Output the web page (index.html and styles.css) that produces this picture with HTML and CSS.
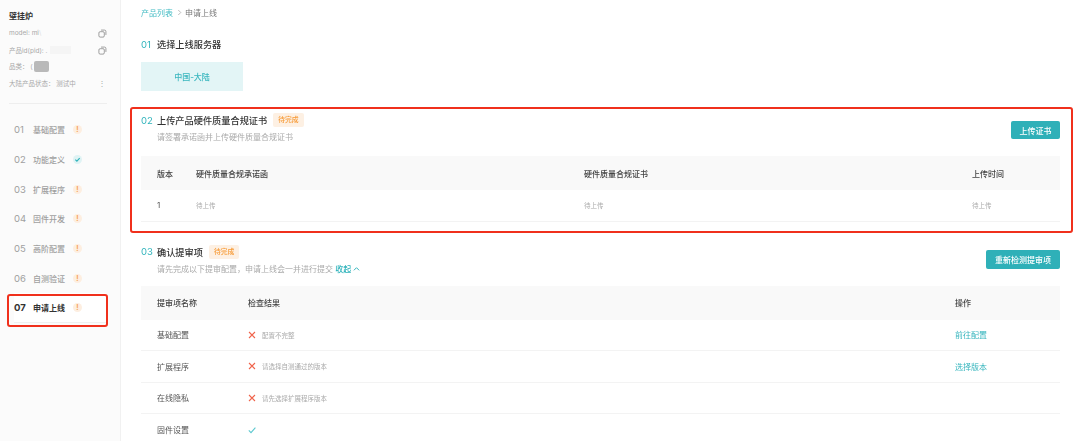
FILE: index.html
```html
<!DOCTYPE html>
<html lang="zh">
<head>
<meta charset="utf-8">
<title>申请上线</title>
<link rel="stylesheet" href="styles.css">
</head>
<body>
<div class="page">
  <aside class="side">
    <h1 class="prod">壁挂炉</h1>
    <div class="meta"><span>model: mi<span class="fade">\</span></span><svg class="copy" viewBox="0 0 10 10"><rect x="1" y="3" width="6" height="6" rx="1.4"/><path d="M3.4 1.2h3.8a1.6 1.6 0 0 1 1.6 1.6v3.8"/></svg></div>
    <div class="meta"><span>产品id(pid): .</span><span class="mask-light"></span><svg class="copy" viewBox="0 0 10 10"><rect x="1" y="3" width="6" height="6" rx="1.4"/><path d="M3.4 1.2h3.8a1.6 1.6 0 0 1 1.6 1.6v3.8"/></svg></div>
    <div class="meta"><span>品类： (</span><span class="mask-grey"></span></div>
    <div class="meta"><span>大陆产品状态： 测试中</span><span class="dots">⋮</span></div>
    <div class="divider"></div>
    <nav class="steps">
      <div class="step"><b>01</b><span>基础配置</span><i class="warn">!</i></div>
      <div class="step"><b>02</b><span>功能定义</span><i class="ok"><svg viewBox="0 0 8 8"><path d="M1.5 4.2 3.3 6l3.2-3.6"/></svg></i></div>
      <div class="step"><b>03</b><span>扩展程序</span><i class="warn">!</i></div>
      <div class="step"><b>04</b><span>固件开发</span><i class="warn">!</i></div>
      <div class="step"><b>05</b><span>高阶配置</span><i class="warn">!</i></div>
      <div class="step"><b>06</b><span>自测验证</span><i class="warn">!</i></div>
      <div class="step active"><b>07</b><span>申请上线</span><i class="warn">!</i></div>
    </nav>
    <div class="mark mark-side"></div>
  </aside>
  <main class="main">
    <div class="crumb"><a>产品列表</a><svg viewBox="0 0 6 8"><path d="M1.5 1 4.5 4 1.5 7"/></svg><span>申请上线</span></div>

    <section class="s1">
      <div class="head"><b class="num">01</b><h2>选择上线服务器</h2></div>
      <div class="server">中国-大陆</div>
    </section>

    <section class="s2">
      <div class="bar">
        <div>
          <div class="head"><b class="num">02</b><h2>上传产品硬件质量合规证书</h2><em class="tag">待完成</em></div>
          <p class="sub">请签署承诺函并上传硬件质量合规证书</p>
        </div>
        <button class="btn b-up">上传证书</button>
      </div>
      <div class="table t-cert">
        <div class="row th"><span>版本</span><span>硬件质量合规承诺函</span><span>硬件质量合规证书</span><span>上传时间</span></div>
        <div class="row td"><span class="ver">1</span><span class="pend">待上传</span><span class="pend">待上传</span><span class="pend">待上传</span></div>
      </div>
      <div class="mark mark-main"></div>
    </section>

    <section class="s3">
      <div class="bar">
        <div>
          <div class="head"><b class="num">03</b><h2>确认提审项</h2><em class="tag">待完成</em></div>
          <p class="sub">请先完成以下提审配置，申请上线会一并进行提交 <a class="fold">收起<svg viewBox="0 0 8 6"><path d="M1 4.5 4 1.5 7 4.5"/></svg></a></p>
        </div>
        <button class="btn b-re">重新检测提审项</button>
      </div>
      <div class="table t-review">
        <div class="row th"><span>提审项名称</span><span>检查结果</span><span>操作</span></div>
        <div class="row td"><span>基础配置</span><span class="res"><svg class="x" viewBox="0 0 8 8"><path d="M1 1l6 6M7 1 1 7"/></svg>配置不完整</span><a>前往配置</a></div>
        <div class="row td"><span>扩展程序</span><span class="res"><svg class="x" viewBox="0 0 8 8"><path d="M1 1l6 6M7 1 1 7"/></svg>请选择自测通过的版本</span><a>选择版本</a></div>
        <div class="row td"><span>在线隐私</span><span class="res"><svg class="x" viewBox="0 0 8 8"><path d="M1 1l6 6M7 1 1 7"/></svg>请先选择扩展程序版本</span><span></span></div>
        <div class="row td"><span>固件设置</span><span class="res"><svg class="v" viewBox="0 0 8 8"><path d="M.8 4.4 3 6.6 7.4 1.6"/></svg></span><span></span></div>
      </div>
    </section>
  </main>
</div>
</body>
</html>
```

FILE: styles.css
```css
* { box-sizing: border-box; }
html, body { margin: 0; height: 100%; overflow: hidden; background: #fff; }
body {
  font-family: "Inter", "Noto Sans CJK SC", sans-serif;
  font-size: 8px;
  color: #444;
}
.page { display: flex; width: 1080px; height: 441px; filter: blur(.35px); }

.side {
  position: relative;
  flex: 0 0 121px;
  padding: 11px 0 0 9px;
  background: #fbfbfb;
  border-right: 1px solid #f1f1f1;
}
.prod { margin: 0 0 4px; font-size: 8px; line-height: 10px; font-weight: 700; color: #333; }
.meta { display: flex; align-items: center; height: 16.5px; font-size: 6.5px; color: #a8a8a8; position: relative; width: 98px; }
.fade { color: #ddd; }
.copy { position: absolute; right: 0; top: 4px; width: 9px; height: 9px; fill: none; stroke: #8a8a8a; stroke-width: .9; }
.mask-light { width: 21px; height: 8px; margin-left: 3px; background: #f5f5f5; }
.mask-grey { width: 15px; height: 11px; border-radius: 2px; margin-left: 1px; background: #b9b9b9; }
.dots { position: absolute; right: 1px; font-size: 8px; color: #aaa; }
.divider { width: 98px; height: 1px; margin: 12px 0 0; background: #eee; }

.steps { margin: 11px 0 0 5px; }
.step { display: flex; align-items: center; height: 29.7px; color: #a0a0a0; width: 92px; }
.step b { flex: 0 0 19px; font-size: 9.5px; font-weight: 400; }
.step span { flex: 0 0 40px; font-size: 8px; font-weight: 500; }
.step i { display: flex; align-items: center; justify-content: center; width: 9px; height: 9px; border-radius: 50%; font-size: 7px; font-style: normal; font-weight: 700; }
.warn { background: #fdeee0; color: #f5a25a; }
.ok { background: #dff3f4; }
.ok svg { width: 7px; height: 7px; fill: none; stroke: #2fb3bb; stroke-width: 1.3; }
.step.active { background: #fff; color: #333; border-bottom: 1px solid #f0f0f0; }
.step.active b, .step.active span { font-weight: 700; }
.step.active b { color: #333; }

.mark { position: absolute; border: 2px solid #f0301c; border-radius: 3px; }
.mark-side { left: 7px; top: 294px; width: 101px; height: 33px; }
.mark-main { left: -11px; top: -7px; width: 943px; height: 126px; }

.main { flex: 1; padding: 7px 20px 0 20px; min-width: 0; }
a { color: #2fb3bb; }
.crumb { display: flex; align-items: center; height: 10px; font-size: 8px; color: #777; }
.crumb a { color: #45bcc4; }
.crumb svg { width: 5px; height: 7px; margin: 0 3.5px; fill: none; stroke: #999; stroke-width: .8; }

.head { display: flex; align-items: center; height: 12px; }
.num { flex: 0 0 16px; font-size: 9.5px; font-weight: 400; color: #2fb3bb; }
h2 { margin: 0; font-size: 9.2px; font-weight: 500; color: #333; }
.tag { margin-left: 6px; padding: 0 5px; height: 14px; line-height: 14px; border-radius: 2px; background: #fdf0e3; color: #f79a35; font-size: 6.8px; font-style: normal; font-weight: 500; }
.sub { margin: 6px 0 0 16px; line-height: 11px; font-size: 8px; color: #aaa; }
.fold { font-weight: 500; }
.fold svg { width: 7px; height: 6px; margin-left: 2px; fill: none; stroke: #2fb3bb; stroke-width: 1.1; }

.s1 { margin-top: 21px; }
.server { display: flex; align-items: center; justify-content: center; width: 102px; height: 29px; margin-top: 12px; background: #e3f5f6; color: #38b6be; font-size: 8px; font-weight: 500; }

.s2 { position: relative; margin-top: 23px; }
.bar { display: flex; justify-content: space-between; align-items: flex-start; }
.btn { border: 0; padding: 0; border-radius: 2px; background: #2fb0b8; color: #fff; font: 500 8px "Inter", "Noto Sans CJK SC", sans-serif; }
.b-up { width: 49px; height: 18px; margin-top: 7px; }
.b-re { width: 74px; height: 19px; margin-top: 4px; }

.table { margin-top: 0; }
.t-cert { margin-top: 13px; }
.row { display: grid; align-items: center; }
.t-cert .row { grid-template-columns: 39px 388px 388px 1fr; padding-left: 16px; }
.t-review .row { grid-template-columns: 91px 707px 1fr; padding-left: 16px; }
.th { height: 34px; background: #f9f9f9; color: #444; font-weight: 500; font-size: 8px; }
.td { height: 31.5px; border-bottom: 1px solid #f3f3f3; color: #555; }
.pend { font-size: 6.5px; color: #aaa; }
.ver { font-size: 8px; }
.td a { color: #38b6be; }
.res { display: flex; align-items: center; font-size: 6.5px; color: #aaa; }
.x, .v { width: 8px; height: 8px; margin-right: 6px; fill: none; stroke-width: 1.1; }
.x { stroke: #f0644c; }
.v { stroke: #5cc8cf; }

.s3 { margin-top: 24px; }
.t-review { margin-top: 11px; }
.t-review .td:last-child { border-bottom: 0; }
```
